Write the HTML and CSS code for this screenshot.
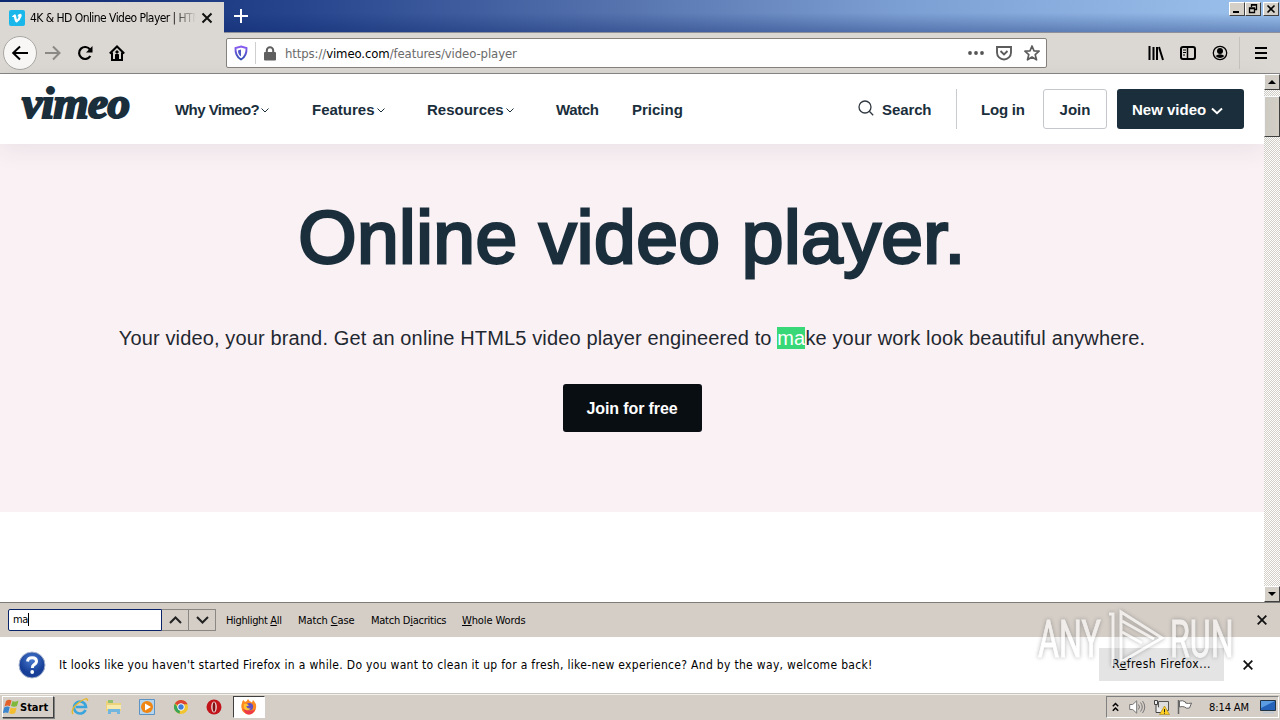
FILE: index.html
```html
<!DOCTYPE html>
<html lang="en">
<head>
    <meta charset="UTF-8">
    <meta name="viewport" content="width=device-width, initial-scale=1.0">
    <title>4K &amp; HD Online Video Player</title>
    <link rel="stylesheet" href="styles.css">
</head>
<body>
    <div class="titlebar">
        <div class="tab">
            <svg class="favicon" width="16" height="16" viewBox="0 0 16 16"><rect width="16" height="16" rx="2" fill="#1ab7ea"/><path d="M3 6.300 5.800 4.200Q6.800 4 7.200 6.500L8 9.800Q9.900 7.600 9.500 6.500 9 6 8.200 6.400 9 3.800 11.200 3.800 13.200 4 12.500 6.600 11.500 9.800 8 12.500 6.500 13 5.800 10.500L4.800 6.900 3.500 7z" fill="#fff"/></svg>
            <span class="tab-title">4K &amp; HD Online Video Player | HTM</span>
            <svg class="tab-close" width="12" height="12" viewBox="0 0 12 12"><path d="m1.500 1.500 9 9m0-9-9 9" stroke="#111" stroke-width="2"/></svg>
        </div>
        <svg class="new-tab" width="14" height="14" viewBox="0 0 14 14"><path d="M7 0v14M0 7h14" stroke="#fff" stroke-width="2"/></svg>
        <div class="window-buttons">
            <span class="win-btn"><svg width="10" height="10" viewBox="0 0 10 10"><path d="M1 8h6" stroke="#000" stroke-width="2"/></svg></span>
            <span class="win-btn"><svg width="10" height="10" viewBox="0 0 10 10"><path d="M3.500 3V.5h5v5h-2M3 1h6M1.500 4h5v4.500h-5zM1 4.500h6" fill="none" stroke="#000" stroke-width="1.300"/></svg></span>
            <span class="win-btn win-close"><svg width="10" height="10" viewBox="0 0 10 10"><path d="m1.500 1.500 7 7m0-7-7 7" stroke="#000" stroke-width="1.600"/></svg></span>
        </div>
    </div>

    <div class="toolbar">
        <span class="back"><svg width="18" height="18" viewBox="0 0 18 18"><path d="M17 9H2m7-6.500L2.200 9 9 15.500" fill="none" stroke="#000" stroke-width="2"/></svg></span>
        <svg class="forward" width="16" height="16" viewBox="0 0 16 16"><path d="M0 8h14M8 1.500 14.500 8 8 14.500" fill="none" stroke="#8b8986" stroke-width="2"/></svg>
        <svg class="reload" width="16" height="16" viewBox="0 0 16 16"><path d="M13 4.500A6 6 0 1 0 13.300 11" fill="none" stroke="#000" stroke-width="2.200"/><path d="M15.500 1v6.500H9z"/></svg>
        <svg class="home" width="16" height="16" viewBox="0 0 16 16"><path d="M.8 8.500 8 1.500l7.200 7M3 7.500V15h10V7.500" fill="none" stroke="#000" stroke-width="2"/><path d="M6.500 15V9.500h3V15M7 6h2v2H7z" stroke="#000"/></svg>
        <div class="url-bar">
            <svg class="shield" width="14" height="16" viewBox="0 0 14 16"><defs><linearGradient id="violet" x2="0" y2="1"><stop stop-color="#8a5cf0"/><stop offset="1" stop-color="#334fb4"/></linearGradient></defs><path d="M7 1.500 12.500 3q.5 8-5.500 11.500Q1 11 1.500 3z" fill="none" stroke="url(#violet)" stroke-width="1.900"/><path d="M7 4.500v7q-3-2-3-6z" fill="#5058c8"/></svg>
            <span class="url-sep"></span>
            <svg class="lock" width="12" height="15" viewBox="0 0 12 15"><rect y="6" width="12" height="8.500" rx="1" fill="#5f5f5f"/><path d="M2.800 7V4.500a3.200 3.200 0 0 1 6.400 0V7" fill="none" stroke="#5f5f5f" stroke-width="2"/></svg>
            <span class="url">https://<b>vimeo.com</b>/features/video-player</span>
            <span class="url-actions">
                <svg width="16" height="16" viewBox="0 0 16 16" fill="#555"><circle cx="2" cy="8" r="1.900"/><circle cx="8" cy="8" r="1.900"/><circle cx="14" cy="8" r="1.900"/></svg>
                <svg width="16" height="16" viewBox="0 0 16 16" fill="none" stroke="#5c5c5c" stroke-width="1.900"><path d="M1 2h14v5.500a7 7 0 0 1-14 0z"/><path d="m4.500 6 3.500 3.500L11.500 6"/></svg>
                <svg width="16" height="16" viewBox="0 0 16 16" fill="none" stroke="#5c5c5c" stroke-width="1.700" stroke-linejoin="round"><path d="m8 1 2 4.800 5.100.4-3.900 3.400 1.300 5.200L8 12l-4.500 2.800 1.300-5.200L.9 6.200 6 5.800z"/></svg>
            </span>
        </div>
        <div class="tools">
            <svg width="16" height="16" viewBox="0 0 16 16" stroke="#000" stroke-width="2"><path d="M1.500 1v14M5.500 2v13M9 2v13M11 2l4 13"/></svg>
            <svg width="16" height="16" viewBox="0 0 16 16" fill="none" stroke="#000" stroke-width="2"><rect x="1" y="2" width="14" height="12" rx="2"/><path d="M7.500 2v12" stroke-width="1.500"/><path d="M3 5h3M3 7.500h3M3 10h2" stroke-width="1"/></svg>
            <svg width="16" height="16" viewBox="0 0 16 16"><circle cx="8" cy="8" r="6.700" fill="none" stroke="#000" stroke-width="1.300"/><circle cx="8" cy="6" r="3"/><path d="M3.500 11Q8 7.500 12.500 11 8 15 3.500 11"/></svg>
        </div>
        <span class="menu"><svg width="12" height="12" viewBox="0 0 12 12"><path d="M0 1h12M0 6h12M0 11h12" stroke="#000" stroke-width="2"/></svg></span>
    </div>

    <div class="viewport">
        <div class="page">
            <div class="nav">
                <span class="logo">vimeo</span>
                <span class="nav-link why"><span>Why Vimeo?</span><svg width="8" height="5" viewBox="0 0 8 5"><path d="m.5.5 3.500 3.500L7.500.5" fill="none" stroke="#1a2e3b"/></svg></span>
                <span class="nav-link features"><span>Features</span><svg width="8" height="5" viewBox="0 0 8 5"><path d="m.5.5 3.500 3.500L7.500.5" fill="none" stroke="#1a2e3b"/></svg></span>
                <span class="nav-link resources"><span>Resources</span><svg width="8" height="5" viewBox="0 0 8 5"><path d="m.5.5 3.500 3.500L7.500.5" fill="none" stroke="#1a2e3b"/></svg></span>
                <span class="nav-link watch">Watch</span>
                <span class="nav-link pricing">Pricing</span>
                <span class="search"><svg width="16" height="16" viewBox="0 0 16 16" fill="none" stroke="#303840" stroke-width="1.300"><circle cx="7" cy="7" r="6"/><path d="m11.300 11.300 3.900 3.900"/></svg><span>Search</span></span>
                <span class="nav-sep"></span>
                <span class="login">Log in</span>
                <span class="join">Join</span>
                <span class="new-video"><span>New video</span><svg width="12" height="8" viewBox="0 0 12 8"><path d="m1 1.500 5 4.700 5-4.700" fill="none" stroke="#fff" stroke-width="2"/></svg></span>
            </div>
            <div class="hero">
                <h1>Online video player.</h1>
                <p>Your video, your brand. Get an online HTML5 video player engineered to <mark>ma</mark>ke your work look beautiful anywhere.</p>
                <span class="cta">Join for free</span>
            </div>
        </div>
        <div class="scrollbar">
            <span class="scroll-btn"><svg width="8" height="4" viewBox="0 0 8 4"><path d="M0 4h8L4 0z"/></svg></span>
            <span class="thumb"></span>
            <span class="scroll-btn scroll-down"><svg width="8" height="4" viewBox="0 0 8 4"><path d="M0 0h8L4 4z"/></svg></span>
        </div>
    </div>

    <div class="findbar">
        <span class="find-input">ma</span>
        <span class="find-btn"><svg width="13" height="8" viewBox="0 0 13 8"><path d="m1 7 5.500-5.500L12 7" fill="none" stroke="#222" stroke-width="2"/></svg></span>
        <span class="find-btn"><svg width="13" height="8" viewBox="0 0 13 8"><path d="m1 1 5.500 5.500L12 1" fill="none" stroke="#222" stroke-width="2"/></svg></span>
        <span class="find-opt all">Highlight <u>A</u>ll</span>
        <span class="find-opt case">Match <u>C</u>ase</span>
        <span class="find-opt diacritics">Match D<u>i</u>acritics</span>
        <span class="find-opt words"><u>W</u>hole Words</span>
        <svg class="bar-close" width="10" height="10" viewBox="0 0 10 10"><path d="m.7.700 8.600 8.600m0-8.600L.7 9.300" stroke="#111" stroke-width="1.800"/></svg>
    </div>

    <div class="notification">
        <svg width="28" height="28" viewBox="0 0 28 28"><defs><radialGradient id="ball" cy=".3"><stop stop-color="#4a7bd0"/><stop offset="1" stop-color="#173f98"/></radialGradient></defs><circle cx="14" cy="14" r="13" fill="url(#ball)" stroke="#a6b3cc"/><path d="M9.500 10.500Q10 6.800 14.200 6.800t4.300 3.500q0 2-2.400 3.300-1.800 1-1.800 3.400" fill="none" stroke="#fff" stroke-width="3"/><circle cx="14.200" cy="21" r="1.900" fill="#fff"/></svg>
        <span class="message">It looks like you haven't started Firefox in a while. Do you want to clean it up for a fresh, like-new experience? And by the way, welcome back!</span>
        <span class="refresh"><span>R<u>e</u>fresh Firefox...</span></span>
        <svg class="note-close" width="10" height="10" viewBox="0 0 10 10"><path d="m.7.700 8.600 8.600m0-8.600L.7 9.300" stroke="#111" stroke-width="1.800"/></svg>
    </div>

    <div class="taskbar">
        <span class="start">
            <svg width="17" height="16" viewBox="0 0 17 16"><path d="M3 2q3-2 5.500-.5L7 7Q4 6 1.500 7.500z" fill="#e3622b"/><path d="M9.500 2q3 1.500 6-.5L14 7q-3 1.500-6 0z" fill="#7fb83c"/><path d="M1.200 8.500Q4 7 6.700 8l-1.500 6Q3 13-.2 14z" fill="#3c86ce"/><path d="M7.700 8.500q3 1.500 6 0l-1.500 5.500q-3 2-6 .3z" fill="#f2bd31"/></svg>
            <b>Start</b>
        </span>
        <span class="launchers">
            <svg width="18" height="18" viewBox="0 0 18 18" fill="none"><path d="M14.500 12A6 6 0 1 1 15 9H5" stroke="#39a5dc" stroke-width="2.600"/><path d="M2 16Q-1 11 8 4.500T16.500 3" stroke="#e6b82e" stroke-width="1.500"/></svg>
            <svg width="18" height="18" viewBox="0 0 18 18"><path d="M1 3h6l1 2h8v8H1z" fill="#ecd27a"/><path d="M3 2h5v3H3z" fill="#92bf70"/><path d="M2 7h14v4H2z" fill="#f7e9ac"/><path d="M3 16v-5h12v5h-3v-2H6v2z" fill="#70b6df"/></svg>
            <svg width="18" height="18" viewBox="0 0 18 18"><path d="M1.500 1.500h15v15h-15z" fill="#b5d5ee" stroke="#5c93c2"/><circle cx="9" cy="9" r="6" fill="#ef8512"/><path d="m7 5.500 6 3.500-6 3.500z" fill="#fff"/></svg>
            <svg width="18" height="18" viewBox="0 0 18 18"><circle cx="9" cy="9" r="7" fill="#f2c52e"/><path d="M9 9 2.900 5.500a7 7 0 0 1 12.600.8H9z" fill="#dc4534"/><path d="M2.900 5.500 8 13l-.5 2.800a7 7 0 0 1-4.600-10.300" fill="#3aa457"/><circle cx="9" cy="9" r="3.300" fill="#3f7ed8" stroke="#fff"/></svg>
            <svg width="18" height="18" viewBox="0 0 18 18"><circle cx="9" cy="9" r="7.500" fill="#c2151b"/><ellipse cx="9" cy="9" rx="2.800" ry="5.500" fill="#efdcdc"/><ellipse cx="9" cy="9" rx="1.400" ry="4.800" fill="#801013"/></svg>
        </span>
        <span class="task-active"><svg width="18" height="18" viewBox="0 0 18 18"><path d="M2 5q0-2 1.500-3L5 4q2-.5 3-3 1 2 4 3.500Q12.500 3 13 2q4 4 3 8a7.300 7.300 0 0 1-14.500 0Q1 7 2 5" fill="#ff8a20"/><path d="M3 11q2 5.500 6 5.500T15.500 11q-2 2-6 1.500T3 11" fill="#ed3a48"/><circle cx="9.500" cy="8.700" r="3.600" fill="#6550c2"/><path d="M4 6q3-1 5 1.500l-3 1q2 3 5 1.500-2 3-5 2T4 6" fill="#ffc233"/></svg></span>
        <span class="tray">
            <svg class="chevrons" width="7" height="10" viewBox="0 0 7 10"><path d="m.8 4.200 2.700-2.700 2.700 2.700M.8 8.700 3.500 6l2.700 2.700" fill="none" stroke="#000" stroke-width="1.500"/></svg>
            <svg class="volume" width="17" height="14" viewBox="0 0 17 14"><path d="M.7 4.500h3l4-3.700v12.400l-4-3.700h-3z" fill="#fff" stroke="#777"/><path d="M9.500 4.500q2 2.500 0 5M11.500 2.500q3.500 4.500 0 9M13.500 1q4.500 6 0 12" fill="none" stroke="#777"/></svg>
            <svg class="network" width="17" height="16" viewBox="0 0 17 16"><path d="M5.500 2.500h10v9h-10z" fill="#ddd" stroke="#555"/><path d="M1.500 1.500h3v4h-3zM3 6v7.500h8" fill="#eee" stroke="#444"/><path d="m11.500 7 5 8.500h-10z" fill="#ffcf23" stroke="#a28212" stroke-width=".6"/><path d="M11.500 10v3m0 .700v1" stroke="#222"/></svg>
            <svg class="flag" width="16" height="16" viewBox="0 0 16 16"><path d="M1.500 1v14" stroke="#666" stroke-width="1.500"/><path d="M2.500 2q3-1 6 1v1q3 1 6 0l-2 5q-3 1-5-1-2-1-5 0z" fill="#fff" stroke="#666"/></svg>
            <span class="clock">8:14 AM</span>
            <svg class="desktop" width="16" height="14" viewBox="0 0 16 14"><path d="M.5.500h15v10H.5z" fill="#2462ba" stroke="#234"/><path d="M1 1h14L1 8z" fill="#5a9be2"/><path d="M3 12.500h11" stroke="#bec8d3" stroke-width="2"/></svg>
        </span>
    </div>

    <div class="watermark">
        <span>ANY</span>
        <svg width="58" height="64" viewBox="0 0 58 64" fill="none" stroke="#fff" stroke-width="3"><path d="M5 58V6H1M13 4v50L54 30z"/><path d="M14 13 46 31M14 24l20 11"/></svg>
        <span>RUN</span>
    </div>
</body>
</html>
```

FILE: styles.css
```css
body {
    margin: 0;
    width: 1280px;
    height: 720px;
    overflow: hidden;
    display: flex;
    flex-direction: column;
    position: relative;
    background: #fff;
    color: #000;
    font-family: "DejaVu Sans Condensed", "DejaVu Sans", sans-serif;
    font-size: 11px;
    white-space: nowrap;
}
svg {
    display: block;
    flex: none;
}
span {
    flex: none;
}

/* browser chrome */
.titlebar {
    height: 33px;
    box-sizing: border-box;
    display: flex;
    border-bottom: 1px solid #8d9098;
    background: linear-gradient(to bottom, rgba(10, 36, 106, 0) 40%, rgba(10, 36, 106, 0.35)), linear-gradient(to right, #0c2870 0, #26458d 300px, #5673ae 620px, #7c9fd3 900px, #9cc2ed 1280px);
}
.tab {
    width: 224px;
    height: 31px;
    margin-top: 2px;
    display: flex;
    align-items: center;
    background: #dbd7d2;
}
.favicon {
    margin-left: 9px;
}
.tab-title {
    width: 166px;
    margin-left: 5px;
    font-size: 12px;
    letter-spacing: -0.55px;
    -webkit-mask-image: linear-gradient(to right, #000 142px, transparent);
    mask-image: linear-gradient(to right, #000 142px, transparent);
}
.tab-close {
    margin-left: 5px;
}
.new-tab {
    margin: 9px 0 0 10px;
}
.window-buttons {
    display: flex;
    margin: 2px 1px 0 auto;
}
.win-btn {
    width: 16px;
    height: 14px;
    box-sizing: border-box;
    display: flex;
    align-items: center;
    justify-content: center;
    background: #d4d0c8;
    border: 1px solid;
    border-color: #fff #404040 #404040 #fff;
}
.win-close {
    margin-left: 2px;
}
.toolbar {
    height: 41px;
    box-sizing: border-box;
    display: flex;
    align-items: center;
    background: #dbd7d2;
    border-bottom: 1px solid #858585;
}
.back {
    width: 34px;
    height: 34px;
    box-sizing: border-box;
    margin-left: 3px;
    display: flex;
    align-items: center;
    justify-content: center;
    border: 1px solid #aaa8a4;
    border-radius: 50%;
    background: #f8f7f6;
}
.forward {
    margin-left: 8px;
}
.reload {
    margin-left: 16px;
}
.home {
    margin-left: 16px;
}
.url-bar {
    width: 821px;
    height: 30px;
    box-sizing: border-box;
    margin-left: 101px;
    display: flex;
    align-items: center;
    background: #fff;
    border: 1px solid #85827d;
    border-radius: 2px;
}
.shield {
    margin-left: 7px;
}
.url-sep {
    width: 1px;
    height: 22px;
    margin-left: 7px;
    background: #cfcfcf;
}
.lock {
    margin-left: 8px;
}
.url {
    margin-left: 9px;
    color: #6a6a6a;
    font-size: 13px;
    letter-spacing: -0.1px;
}
.url b {
    color: #000;
    font-weight: normal;
}
.url-actions {
    display: flex;
    gap: 12px;
    margin: 0 6px 0 auto;
}
.tools {
    display: flex;
    gap: 16px;
    margin-left: 101px;
}
.menu {
    height: 32px;
    margin-left: 11px;
    padding-left: 15px;
    display: flex;
    align-items: center;
    border-left: 1px solid #c5c2bd;
}

/* web page */
.viewport {
    height: 528px;
    display: flex;
    font-family: "Liberation Sans", Arial, sans-serif;
    color: #1a2e3b;
}
.page {
    width: 1264px;
}
.nav {
    position: relative;
    height: 70px;
    display: flex;
    align-items: center;
    background: #fff;
    box-shadow: 0 6px 24px rgba(26, 46, 59, 0.08);
    font-size: 15px;
    font-weight: bold;
}
.nav > span {
    box-sizing: border-box;
}
.logo {
    width: 175px;
    padding: 0 0 12px 22px;
    font-family: "Liberation Serif", serif;
    font-size: 45px;
    line-height: 50px;
    font-style: italic;
    letter-spacing: -0.5px;
    -webkit-text-stroke: 2.2px #1a2e3b;
}
.nav-link {
    display: flex;
    align-items: center;
    gap: 2px;
}
.nav-link svg {
    margin-top: 2px;
}
.why {
    width: 137px;
    letter-spacing: -0.55px;
}
.features {
    width: 115px;
}
.resources {
    width: 129px;
}
.watch {
    width: 76px;
    letter-spacing: -0.4px;
}
.search {
    margin-left: auto;
    width: 98px;
    display: flex;
    align-items: center;
    gap: 8px;
    letter-spacing: -0.1px;
}
.search svg {
    margin-top: -2px;
}
.nav-sep {
    width: 1px;
    height: 40px;
    background: #c9cccf;
}
.login {
    width: 62px;
    margin-left: 24px;
    letter-spacing: -0.2px;
}
.join {
    width: 64px;
    height: 40px;
    line-height: 40px;
    border: 1px solid #c4c8cc;
    border-radius: 3px;
    text-align: center;
}
.new-video {
    width: 127px;
    height: 40px;
    margin: 0 20px 0 10px;
    padding-left: 15px;
    display: flex;
    align-items: center;
    gap: 5px;
    color: #fff;
    background: #1a2e3b;
    border-radius: 3px;
}
.new-video svg {
    margin-top: 3px;
}
.hero {
    height: 368px;
    display: flex;
    flex-direction: column;
    align-items: center;
    background: #faf1f4;
}
.hero h1 {
    margin: 49px 0 0;
    font-size: 75px;
    font-weight: normal;
    line-height: 88px;
    letter-spacing: 0.45px;
    -webkit-text-stroke: 2.8px #1a2e3b;
}
.hero p {
    margin: 45px 0 0;
    font-size: 20px;
    line-height: 24px;
    letter-spacing: 0.14px;
    color: #1f2830;
}
.hero mark {
    background: #38d878;
    color: #fff;
}
.cta {
    width: 139px;
    height: 48px;
    margin-top: 34px;
    line-height: 49px;
    text-align: center;
    color: #fff;
    background: #090e13;
    border-radius: 3px;
    font-size: 16px;
    font-weight: bold;
    letter-spacing: -0.1px;
}
.scrollbar {
    width: 16px;
    display: flex;
    flex-direction: column;
    background: repeating-conic-gradient(#d4d0c8 0 25%, #fff 0 50%) 0 0 / 2px 2px;
}
.scroll-btn, .thumb {
    height: 16px;
    box-sizing: border-box;
    display: flex;
    align-items: center;
    justify-content: center;
    background: #d4d0c8;
    border: 1px solid;
    border-color: #fff #404040 #404040 #fff;
}
.thumb {
    height: 41px;
    margin-top: 6px;
}
.scroll-down {
    margin-top: auto;
}

/* find bar and notification */
.findbar {
    height: 35px;
    box-sizing: border-box;
    display: flex;
    align-items: center;
    background: #d5cec7;
    border-top: 1px solid #7c7b78;
}
.find-input {
    width: 154px;
    height: 22px;
    box-sizing: border-box;
    margin-left: 8px;
    padding-left: 4px;
    line-height: 20px;
    background: #fff;
    border: 1px solid #0a246a;
    border-radius: 2px 0 0 2px;
    letter-spacing: -0.4px;
}
.find-input::after {
    content: "";
    display: inline-block;
    width: 1px;
    height: 13px;
    background: #000;
    vertical-align: -3px;
}
.find-btn {
    width: 27px;
    height: 22px;
    box-sizing: border-box;
    display: flex;
    align-items: center;
    justify-content: center;
    border: 1px solid #8b8883;
    border-left: 0;
}
.find-opt {
    letter-spacing: -0.1px;
}
.all {
    width: 72px;
    margin-left: 10px;
    letter-spacing: -0.35px;
}
.case {
    width: 73px;
}
.diacritics {
    width: 91px;
    letter-spacing: -0.25px;
}
.bar-close {
    margin: 0 13px 0 auto;
}
.notification {
    height: 56px;
    display: flex;
    align-items: center;
    background: #fff;
}
.notification > svg:first-child {
    margin-left: 18px;
}
.message {
    margin-left: 13px;
    font-size: 12px;
    letter-spacing: 0.31px;
}
.refresh {
    width: 125px;
    height: 33px;
    margin: -2px 0 0 auto;
    line-height: 33px;
    text-align: center;
    background: #e4e4e4;
    font-size: 12px;
    letter-spacing: 0.5px;
}
.note-close {
    margin: 0 27px 0 19px;
}

/* taskbar */
.taskbar {
    height: 27px;
    box-sizing: border-box;
    display: flex;
    align-items: center;
    background: #d5cec7;
    border-top: 1px solid #c8c4be;
    box-shadow: inset 0 1px #f3f1ed;
}
.start {
    width: 52px;
    height: 22px;
    box-sizing: border-box;
    margin-left: 2px;
    display: flex;
    align-items: center;
    border: 1px solid;
    border-color: #fff #404040 #404040 #fff;
    box-shadow: 1px 1px #808080;
}
.launchers {
    display: flex;
    gap: 15.5px;
    margin-left: 17px;
}
.task-active {
    width: 32px;
    height: 22px;
    box-sizing: border-box;
    margin-left: 10px;
    display: flex;
    align-items: center;
    justify-content: center;
    background: #fff;
    border: 1px solid;
    border-color: #404040 #fff #fff #404040;
}
.tray {
    width: 173px;
    height: 22px;
    box-sizing: border-box;
    margin: 0 1px 0 auto;
    display: flex;
    align-items: center;
    border: 1px solid;
    border-color: #808080 #fff #fff #808080;
}
.chevrons {
    margin-left: 5px;
}
.volume {
    margin-left: 10px;
}
.network {
    margin-left: 7px;
}
.flag {
    margin-left: 7px;
}
.clock {
    width: 42px;
    margin-left: 16px;
    letter-spacing: -0.1px;
}
.desktop {
    margin-left: 9px;
}

.watermark {
    position: absolute;
    left: 1038px;
    top: 608px;
    display: flex;
    align-items: center;
    gap: 4px;
    color: #fff;
    font-family: Roboto, sans-serif;
    font-size: 51px;
    line-height: 64px;
    opacity: 0.65;
    filter: drop-shadow(0 0 2px rgba(90, 90, 90, 0.75));
}
.watermark span {
    width: 66px;
    transform: scaleX(0.63);
    transform-origin: left;
    -webkit-text-stroke: 1px #fff;
}
```
